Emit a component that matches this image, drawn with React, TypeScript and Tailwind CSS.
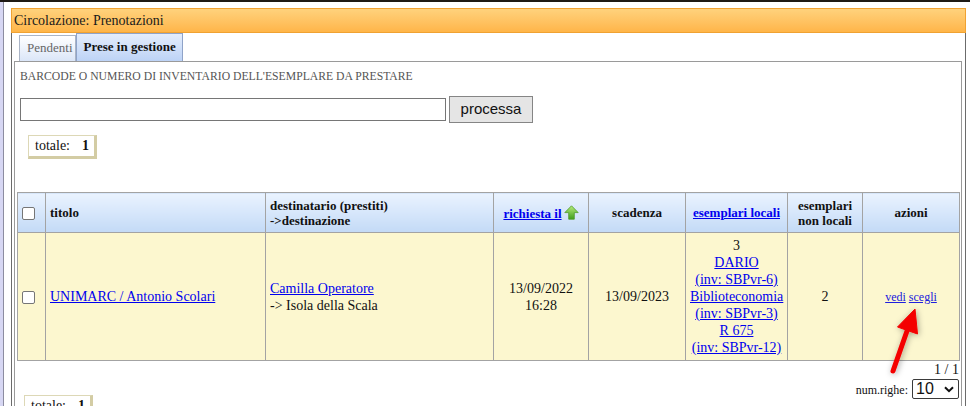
import React from "react";

function Box({ className = "" }: { className?: string }) {
  return (
    <span
      className={
        "inline-block w-[13px] h-[13px] border border-[#767676] rounded-[2px] bg-white align-middle " +
        className
      }
    />
  );
}

function GreenUp() {
  return (
    <svg width="15" height="15" viewBox="0 0 15 15" className="inline-block align-[-2px] ml-[2px]">
      <defs>
        <linearGradient id="gup" x1="0" y1="0" x2="0" y2="1">
          <stop offset="0" stopColor="#b6ec7c" />
          <stop offset="1" stopColor="#3f9e1c" />
        </linearGradient>
      </defs>
      <path
        d="M7.5 0.8 L14.2 7.6 L10.3 7.6 L10.3 14.2 L4.7 14.2 L4.7 7.6 L0.8 7.6 Z"
        fill="url(#gup)"
        stroke="#4e9a2a"
        strokeWidth="0.8"
        strokeLinejoin="round"
      />
    </svg>
  );
}

function Totale({ className = "" }: { className?: string }) {
  return (
    <div
      className={
        "flex items-center h-[24px] w-[69px] bg-white border border-[#ddd8b6] border-r-[3px] border-b-[3px] border-r-[#d3cca4] border-b-[#d3cca4] pl-[6px] text-[14px] leading-[16px] " +
        className
      }
    >
      <span>totale:</span>
      <span className="ml-[12px] font-bold">1</span>
    </div>
  );
}

const th =
  "border border-[#a3a3a3] bg-gradient-to-b from-[#eaf3ff] to-[#c3daf6] text-[13px] leading-[15px] font-bold px-[4px] align-middle";
const td = "border border-[#a3a3a3] bg-[#fcf7cf] text-[14px] leading-[17px] px-[4px] py-[4px] align-middle";
const link = "text-[#0000ee] underline";

export default function App() {
  return (
    <div className="relative w-[970px] h-[406px] overflow-hidden bg-white font-['Liberation_Serif','Times_New_Roman',serif] text-[#111]">
      <div className="h-[2px] bg-[#1e1a14]" />
      <div className="flex">
        <div className="w-[4px] h-[404px] shrink-0 border-r border-[#8c8ca0] bg-[#d7d7f3]" />
        <div className="ml-[7px] mt-[6px] w-[955px]">
          {/* title bar */}
          <div className="h-[25px] border border-[#f0a232] bg-gradient-to-b from-[#ffd27c] to-[#ffb548] pl-[2px] text-[14px] leading-[23px] text-[#1a1a1a]">
            Circolazione: Prenotazioni
          </div>

          <div className="h-[380px] border-x border-[#6b6b6b] pl-[2px] pr-[3px]">
            {/* tabs */}
            <div className="flex items-end h-[28px] pl-[5px]">
              <div className="h-[26px] pl-[7px] pr-[2px] border border-b-0 border-[#aab4c6] bg-gradient-to-b from-white to-[#dbe6f8] text-[13px] leading-[24px] text-[#666]">
                Pendenti
              </div>
              <div className="h-[28px] pl-[7px] pr-[6px] border border-b-0 border-[#8fa3c8] bg-gradient-to-b from-[#e4edfc] to-[#bdd3f6] text-[13px] font-bold leading-[26px] text-[#111]">
                Prese in gestione
              </div>
            </div>

            {/* tab panel */}
            <div className="h-[360px] border border-[#9a9a9a]">
              <div className="pl-[5px] pt-[8px]">
                <div className="text-[11.7px] leading-[14px] text-[#555]">
                  BARCODE O NUMERO DI INVENTARIO DELL'ESEMPLARE DA PRESTARE
                </div>
                <div className="mt-[12px] flex items-center h-[27px]">
                  <input
                    type="text"
                    className="w-[426px] h-[23px] border border-[#767676] bg-white outline-none"
                  />
                  <div className="ml-[3px] w-[84px] h-[27px] border border-[#858585] bg-[#e5e5e5] flex items-center justify-center font-['Liberation_Sans',Arial,sans-serif] text-[15px] text-[#111]">
                    processa
                  </div>
                </div>
              </div>

              <Totale className="ml-[13px] mt-[12px]" />

              <table className="ml-[2px] mt-[33px] w-[942px] table-fixed border-collapse">
                <colgroup>
                  <col className="w-[28px]" />
                  <col className="w-[220px]" />
                  <col className="w-[228px]" />
                  <col className="w-[95px]" />
                  <col className="w-[97px]" />
                  <col className="w-[102px]" />
                  <col className="w-[75px]" />
                  <col className="w-[97px]" />
                </colgroup>
                <thead>
                  <tr className="h-[40px]">
                    <th className={th + " text-left"}>
                      <Box />
                    </th>
                    <th className={th + " text-left"}>titolo</th>
                    <th className={th + " text-left"}>
                      destinatario (prestiti)
                      <br />
                      -&gt;destinazione
                    </th>
                    <th className={th + " text-center"}>
                      <span className={link}>richiesta il</span>
                      <GreenUp />
                    </th>
                    <th className={th + " text-center"}>scadenza</th>
                    <th className={th + " text-center"}>
                      <span className={link}>esemplari locali</span>
                    </th>
                    <th className={th + " text-center"}>
                      esemplari
                      <br />
                      non locali
                    </th>
                    <th className={th + " text-center"}>azioni</th>
                  </tr>
                </thead>
                <tbody>
                  <tr>
                    <td className={td}>
                      <Box />
                    </td>
                    <td className={td}>
                      <span className={link}>UNIMARC / Antonio Scolari</span>
                    </td>
                    <td className={td}>
                      <span className={link}>Camilla Operatore</span>
                      <br />
                      -&gt; Isola della Scala
                    </td>
                    <td className={td + " text-center"}>
                      13/09/2022
                      <br />
                      16:28
                    </td>
                    <td className={td + " text-center"}>13/09/2023</td>
                    <td className={td + " text-center px-[2px]"}>
                      3
                      <br />
                      <span className={link}>DARIO</span>
                      <br />
                      <span className={link}>(inv: SBPvr-6)</span>
                      <br />
                      <span className={link}>Biblioteconomia</span>
                      <br />
                      <span className={link}>(inv: SBPvr-3)</span>
                      <br />
                      <span className={link}>R 675</span>
                      <br />
                      <span className={link}>(inv: SBPvr-12)</span>
                    </td>
                    <td className={td + " text-center"}>2</td>
                    <td className={td + " text-center"}>
                      <span className="text-[12px] leading-[14px]">
                        <span className="text-[#2020dd] underline">vedi</span>{" "}
                        <span className="text-[#2020dd] underline">scegli</span>
                      </span>
                    </td>
                  </tr>
                </tbody>
              </table>

              <div className="mx-[2px] mt-[1px] text-right text-[14px] leading-[16px]">1 / 1</div>
              <div className="mx-[2px] mt-[1px] flex justify-end items-center gap-[4px] h-[20px]">
                <span className="text-[12px] leading-[14px] mt-[1px]">num.righe:</span>
                <div className="w-[47px] h-[20px] border border-[#3a3a3a] rounded-[2px] bg-white flex items-center pl-[3px] pr-[4px] font-['Liberation_Sans',Arial,sans-serif] text-[16px] leading-[18px]">
                  <span>10</span>
                  <svg width="10" height="7" viewBox="0 0 10 7" className="ml-auto">
                    <path d="M1 1.2 L5 5.2 L9 1.2" fill="none" stroke="#111" strokeWidth="2" />
                  </svg>
                </div>
              </div>
              <Totale className="ml-[9px] -mt-[4px]" />
            </div>
          </div>
        </div>
      </div>

      {/* red pointer toward the "scegli" action */}
      <svg className="absolute left-0 top-0 pointer-events-none" width="970" height="406">
        <defs>
          <filter id="sh" x="-50%" y="-50%" width="200%" height="200%">
            <feDropShadow dx="1" dy="1" stdDeviation="3" floodColor="#000" floodOpacity="0.35" />
          </filter>
        </defs>
        <g filter="url(#sh)">
          <line x1="893" y1="371" x2="907" y2="331" stroke="#f40000" strokeWidth="5" strokeLinecap="round" />
          <path d="M915 309 L917.5 334 L897.5 327 Z" fill="#f40000" stroke="#f40000" strokeWidth="1" strokeLinejoin="round" />
        </g>
      </svg>
    </div>
  );
}
